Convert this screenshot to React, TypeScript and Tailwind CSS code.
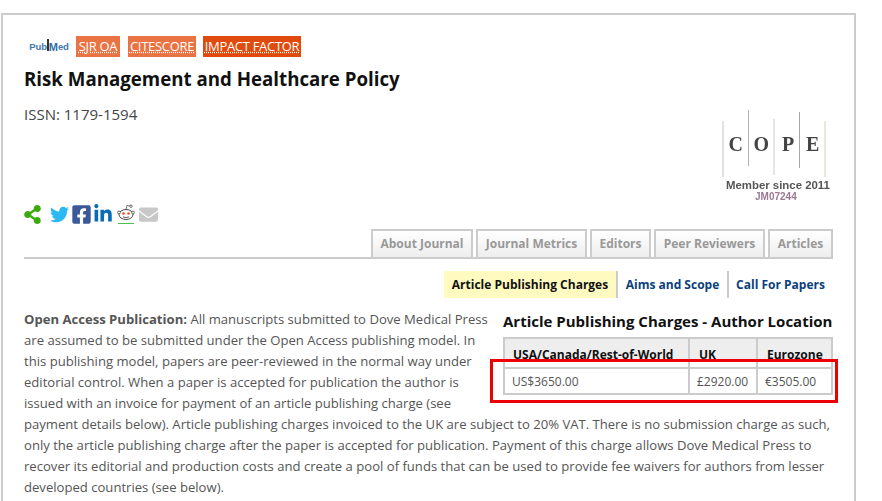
import { FaShareAlt, FaTwitter, FaFacebookSquare, FaLinkedinIn, FaEnvelope } from "react-icons/fa";

const tabs = [
  { label: "About Journal", width: "w-[102px]" },
  { label: "Journal Metrics", width: "w-[111px]" },
  { label: "Editors", width: "w-[61px]" },
  { label: "Peer Reviewers", width: "w-[111px]" },
  { label: "Articles", width: "w-[65px]" },
];

function PubMedLogo() {
  return (
    <div className="mr-[4px] flex h-[21px] w-[44px] items-center justify-center font-['Liberation_Sans',sans-serif] text-[9.5px] font-bold leading-none tracking-[-0.1px] text-[#3f78ad]">
      <span>Pub</span>
      <span className="mb-[3px] h-[12px] w-[2px] bg-[#333]" />
      <span className="mt-[2px] text-[11px] text-[#2f6ea8]">M</span>
      <span>ed</span>
    </div>
  );
}

function RedditIcon() {
  return (
    <svg width="18" height="22" viewBox="0 0 18 22" fill="none">
      <ellipse cx="9" cy="11.5" rx="7" ry="5" stroke="#333" strokeWidth="0.9" fill="#fff" />
      <circle cx="2" cy="9.5" r="1.4" stroke="#333" strokeWidth="0.7" fill="#fff" />
      <circle cx="16" cy="9.5" r="1.4" stroke="#333" strokeWidth="0.7" fill="#fff" />
      <circle cx="6.5" cy="10.5" r="1.3" fill="#f04a14" />
      <circle cx="11.5" cy="10.5" r="1.3" fill="#f04a14" />
      <path d="M6 13.8 Q9 15.6 12 13.8" stroke="#333" strokeWidth="0.8" />
      <path d="M9 6.5 L10 2.5 L13 3.2" stroke="#333" strokeWidth="0.7" />
      <circle cx="14" cy="3.2" r="1.2" stroke="#333" strokeWidth="0.7" fill="#fff" />
      <line x1="1" y1="20.5" x2="17" y2="20.5" stroke="#4cc04c" strokeWidth="1" />
    </svg>
  );
}

function CopeLogo() {
  return (
    <svg width="112" height="94" viewBox="0 0 112 94" className="blur-[0.3px]">
      <line x1="2" y1="11" x2="2" y2="67" stroke="#c4c4c4" strokeWidth="1" />
      <line x1="27.5" y1="0" x2="27.5" y2="56" stroke="#b9aeb2" strokeWidth="1" />
      <line x1="53" y1="9" x2="53" y2="65" stroke="#cdcdc6" strokeWidth="1" />
      <line x1="78.5" y1="2" x2="78.5" y2="58" stroke="#a9a9a9" strokeWidth="1" />
      <line x1="104" y1="11" x2="104" y2="67" stroke="#d6cfbd" strokeWidth="1" />
      <text x="7.5" y="41" fontFamily="'Liberation Serif', serif" fontSize="20" fontWeight="bold" fill="#444">C</text>
      <text x="32.5" y="41" fontFamily="'Liberation Serif', serif" fontSize="20" fontWeight="bold" fill="#444">O</text>
      <text x="61" y="41" fontFamily="'Liberation Serif', serif" fontSize="20" fontWeight="bold" fill="#444">P</text>
      <text x="85" y="41" fontFamily="'Liberation Serif', serif" fontSize="20" fontWeight="bold" fill="#444">E</text>
      <text x="5" y="79" fontFamily="'Liberation Sans', sans-serif" fontSize="11.4" fontWeight="bold" fill="#555">Member since 2011</text>
      <text x="34" y="90" fontFamily="'Liberation Sans', sans-serif" fontSize="10" fontWeight="bold" fill="#9a7a93">JM07244</text>
    </svg>
  );
}

export default function App() {
  return (
    <div className="relative h-[501px] w-[882px] overflow-hidden bg-white font-['Open_Sans',sans-serif] text-[#444]">
      <div className="ml-[1px] mt-[13px] h-[488px] w-[855px] border-x-2 border-t-2 border-[#ccc] px-[21px] pt-[21px]">
        <div className="flex h-[21px] items-center pl-[3px]">
          <PubMedLogo />
          <span className="ml-[1px] mr-[8px] flex h-[21px] w-[44px] items-center justify-center whitespace-nowrap bg-[#e97342] text-[13px] tracking-[-0.3px] text-white underline decoration-dotted">SJR OA</span>
          <span className="mr-[7px] flex h-[21px] w-[68px] items-center justify-center whitespace-nowrap bg-[#e97342] text-[13px] tracking-[-0.3px] text-white underline decoration-dotted">CITESCORE</span>
          <span className="flex h-[21px] w-[98px] items-center justify-center whitespace-nowrap bg-[#e04a0c] text-[13px] tracking-[-0.3px] text-white underline decoration-dotted">IMPACT FACTOR</span>
        </div>

        <h1 className="mt-[8px] text-[18.7px] font-bold leading-[28px] text-[#111]">Risk Management and Healthcare Policy</h1>

        <div className="flex h-[131px] justify-between">
          <div className="flex flex-col justify-between">
            <p className="mt-[11px] text-[15px] leading-[20px]">ISSN: 1179-1594</p>
            <div className="mb-[-1px] flex h-[22px] items-center">
              <FaShareAlt className="ml-[-1px] text-[#3aaa0c]" size={19} />
              <FaTwitter className="ml-[8px] text-[#2cb8f2]" size={19} />
              <FaFacebookSquare className="ml-[2px] text-[#3b5998]" size={21} />
              <FaLinkedinIn className="ml-[1px] text-[#0a6cb5]" size={20} />
              <div className="ml-[4px]">
                <RedditIcon />
              </div>
              <FaEnvelope className="ml-[4px] text-[#c8c8c8]" size={19} />
            </div>
          </div>
          <div className="mt-[17px]">
            <CopeLogo />
          </div>
        </div>

        <div className="mt-[5px] flex h-[30px] justify-end gap-[3px] border-b-2 border-[#ccc]">
          {tabs.map((tab) => (
            <div
              key={tab.label}
              className={`${tab.width} flex h-[30px] items-center justify-center border-2 border-[#ccc] bg-gradient-to-b from-white to-[#eee] text-[12px] font-bold text-[#999]`}
            >
              {tab.label}
            </div>
          ))}
        </div>

        <div className="mt-[12px] flex h-[27px] justify-end text-[12px] font-bold">
          <div className="flex w-[174px] items-center justify-center border-r-2 border-[#ccc] bg-[#fffbc0] text-[#111]">Article Publishing Charges</div>
          <div className="flex w-[111px] items-center justify-center border-r-2 border-[#ccc] text-[#0a3f7c]">Aims and Scope</div>
          <div className="flex w-[104px] items-center justify-center pr-[1px] text-[#0a3f7c]">Call For Papers</div>
        </div>

        <div className="mt-[11px] text-[13.1px] leading-[21px] text-[#555]">
          <div className="float-right ml-[14px] w-[330px] pt-[2px]">
            <h2 className="mb-[5px] whitespace-nowrap text-[15px] font-bold leading-[21px] text-[#111]">Article Publishing Charges - Author Location</h2>
            <table className="w-[330px] table-fixed border-collapse border-2 border-[#ccc] text-[12px]">
              <thead>
                <tr className="h-[30px] bg-gradient-to-b from-[#eee] from-[76%] to-white to-[76%] text-[#111]">
                  <th className="w-[185px] border-x-2 border-b-2 border-[#ccc] pl-[8px] pt-[2px] text-left font-bold">USA/Canada/Rest-of-World</th>
                  <th className="w-[68px] border-x-2 border-b-2 border-[#ccc] pl-[9px] pt-[2px] text-left font-bold">UK</th>
                  <th className="border-x-2 border-b-2 border-[#ccc] pl-[9px] pt-[2px] text-left font-bold">Eurozone</th>
                </tr>
              </thead>
              <tbody>
                <tr className="h-[26px]">
                  <td className="border-x-2 border-[#ccc] pl-[7px] pt-[1px]">US$3650.00</td>
                  <td className="border-x-2 border-[#ccc] pl-[7px] pt-[1px]">£2920.00</td>
                  <td className="border-x-2 border-[#ccc] pl-[7px] pt-[1px]">€3505.00</td>
                </tr>
              </tbody>
            </table>
          </div>
          <p>
            <strong className="font-bold">Open Access Publication:</strong> All manuscripts submitted to Dove Medical Press are assumed to be submitted under the Open Access publishing model. In this publishing model, papers are peer-reviewed in the normal way under editorial control. When a paper is accepted for publication the author is issued with an invoice for payment of an article publishing charge (see payment details below). Article publishing charges invoiced to the UK are subject to 20% VAT. There is no submission charge as such, only the article publishing charge after the paper is accepted for publication. Payment of this charge allows Dove Medical Press to recover its editorial and production costs and create a pool of funds that can be used to provide fee waivers for authors from lesser developed countries (see below).
          </p>
        </div>
      </div>

      {/* red highlight drawn on top of the table */}
      <div className="absolute left-[490px] top-[359px] h-[44px] w-[348px] border-[3px] border-[#ee0000]" />
    </div>
  );
}
